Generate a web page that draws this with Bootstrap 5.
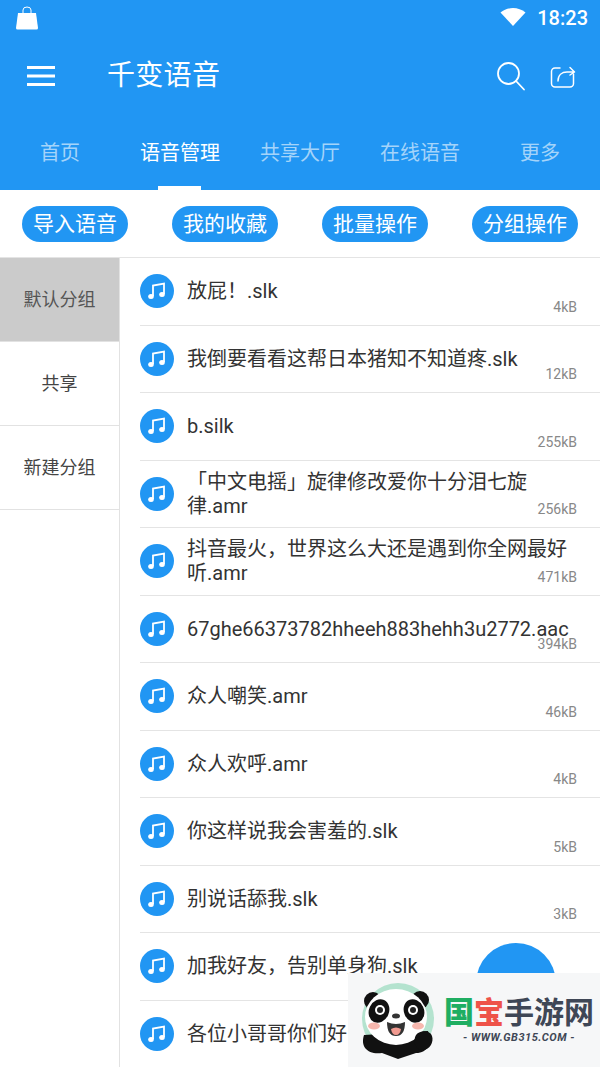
<!DOCTYPE html>
<html lang="zh">
<head>
    <meta charset="UTF-8">
    <meta name="viewport" content="width=device-width, initial-scale=1">
    <title>千变语音</title>
    <link href="https://cdn.jsdelivr.net/npm/bootstrap@5.3.0/dist/css/bootstrap.min.css" rel="stylesheet">
    <style>
        html, body { height: 100%; overflow: hidden; }
        body { font-family: Roboto, "Noto Sans CJK SC", sans-serif; color: #333; background: #fff; }
        .app-page { width: 600px; height: 1067px; overflow: hidden; }
        .app-head { background: #2196f3; height: 190px; color: #fff; }
        .status-bar { height: 36px; padding: 6px 12px 0 15px; }
        .status-time { font-size: 20px; font-weight: 500; line-height: 24px; margin-left: 11px; }
        .tool-bar { height: 80px; padding: 0 20px 0 27px; }
        .app-title { font-size: 28px; line-height: 40px; margin: 0 0 0 52px; font-weight: 400; letter-spacing: .3px; }
        .head-tabs { height: 74px; }
        .head-tab { width: 120px; font-size: 20px; line-height: 28px; padding-top: 23px; color: rgba(255,255,255,.6); text-decoration: none; position: relative; text-align: center; }
        .head-tab.on { color: #fff; }
        .head-tab.on::after { content: ""; position: absolute; left: 38px; bottom: 0; width: 43px; height: 4px; background: #fff; }
        .tool-pills { height: 68px; border-bottom: 1px solid #e4e4e4; }
        .pill-cell { width: 150px; }
        .tool-pill { background: #2196f3; color: #fff; font-size: 21px; line-height: 36px; height: 36px; width: 106px; padding: 0; border: 0; border-radius: 18px; white-space: nowrap; }
        .side-bar { width: 120px; border-right: 1px solid #e2e2e2; }
        .side-item { height: 84px; font-size: 18px; color: #444; border-bottom: 1px solid #e2e2e2; }
        .side-item.on { background: #cbcbcb; color: #555; }
        .file-row { height: 67.5px; margin-left: 20px; border-bottom: 1px solid #e4e4e4; position: relative; }
        .file-note { width: 34px; height: 34px; border-radius: 50%; background: #2196f3; flex: none; }
        .file-name { font-size: 20px; line-height: 24px; margin-left: 13px; width: 400px; color: #333; word-break: break-all; }
        .file-name.one-line { white-space: nowrap; }
        .file-size { position: absolute; right: 23px; bottom: 10px; font-size: 14px; line-height: 16px; color: #888; }
        .fab-round { position: absolute; left: 476px; top: 943px; width: 80px; height: 80px; border-radius: 50%; background: #2196f3; }
        .mark-box { position: absolute; left: 348px; top: 973px; width: 252px; height: 94px; background: #f6f7f8; }
        .mark-cn { font-size: 30px; line-height: 36px; font-weight: 700; white-space: nowrap; color: #3f4756; }
        .mark-cn b { font-weight: 900; }
        .mark-g { color: #1fae62; }
        .mark-r { color: #ee5349; }
        .mark-url { font-size: 11px; line-height: 14px; font-weight: 700; font-style: italic; color: #3f4756; letter-spacing: .5px; white-space: nowrap; }
    </style>
</head>
<body>
<div class="app-page position-relative d-flex flex-column">

    <!-- cabecalho azul -->
    <header class="app-head flex-shrink-0">
        <div class="status-bar d-flex align-items-start">
            <svg width="24" height="24" viewBox="0 0 24 24"><path d="M3 7h18l2 15a1.5 1.5 0 0 1-1.5 1.500h-19A1.500 1.500 0 0 1 1 22z" fill="#fff"/><path d="M8 8V4a4 3 0 0 1 8 0v4" fill="none" stroke="#fff" stroke-width="1"/></svg>
            <svg class="ms-auto" width="26" height="20" viewBox="0 0 26 20"><path d="M0.500 6.500C7.500 0.500 18.500 0.500 25.500 6.500L13 20z" fill="#fff"/></svg>
            <span class="status-time">18:23</span>
        </div>
        <div class="tool-bar d-flex align-items-center">
            <svg width="28" height="22" viewBox="0 0 28 22"><path d="M0 2.500h28M0 11h28M0 19.500h28" stroke="#fff" stroke-width="3"/></svg>
            <h1 class="app-title">千变语音</h1>
            <svg class="ms-auto" width="30" height="30" viewBox="0 0 30 30" fill="none" stroke="#fff" stroke-width="1.800"><circle cx="12.500" cy="12.500" r="10.500"/><path d="M20 20l8 8.500" stroke-linecap="round"/></svg>
            <svg class="ms-4 me-1" width="26" height="24" viewBox="0 0 26 24" fill="none" stroke="#fff" stroke-width="1.500" stroke-linecap="round" stroke-linejoin="round"><path d="M10 4H5a3.500 3.500 0 0 0-3.500 3.500v12A3.500 3.500 0 0 0 5 23h15a3.500 3.500 0 0 0 3.500-3.500V10"/><path d="M8 17c0-6 4-9 9-9h7M20 3.500l4.500 4.500-4.500 3"/></svg>
        </div>
        <nav class="head-tabs d-flex">
            <a class="head-tab" href="#">首页</a>
            <a class="head-tab on" href="#">语音管理</a>
            <a class="head-tab" href="#">共享大厅</a>
            <a class="head-tab" href="#">在线语音</a>
            <a class="head-tab" href="#">更多</a>
        </nav>
    </header>

    <!-- botoes -->
    <div class="tool-pills d-flex flex-shrink-0">
        <div class="pill-cell d-flex justify-content-center align-items-center"><button class="btn tool-pill" type="button">导入语音</button></div>
        <div class="pill-cell d-flex justify-content-center align-items-center"><button class="btn tool-pill" type="button">我的收藏</button></div>
        <div class="pill-cell d-flex justify-content-center align-items-center"><button class="btn tool-pill" type="button">批量操作</button></div>
        <div class="pill-cell d-flex justify-content-center align-items-center"><button class="btn tool-pill" type="button">分组操作</button></div>
    </div>

    <div class="d-flex flex-grow-1 overflow-hidden">
        <aside class="side-bar flex-shrink-0">
            <div class="side-item on d-flex align-items-center justify-content-center">默认分组</div>
            <div class="side-item d-flex align-items-center justify-content-center">共享</div>
            <div class="side-item d-flex align-items-center justify-content-center">新建分组</div>
        </aside>
        <div class="flex-grow-1" id="fileList"></div>
    </div>

    <div class="fab-round"></div>

    <!-- marca d'agua -->
    <div class="mark-box d-flex align-items-center">
        <svg class="ms-2 flex-shrink-0" width="84" height="78" viewBox="0 0 84 78">
            <circle cx="42" cy="38" r="36" fill="#b4e3cf"/>
            <path d="M8 54c-4 12 4 20 18 18l16 6 18-6c12 0 16-10 12-22z" fill="#111"/>
            <circle cx="17" cy="20" r="9" fill="#111"/><circle cx="64" cy="19" r="9" fill="#111"/>
            <ellipse cx="40" cy="36" rx="31" ry="28" fill="#fff"/>
            <ellipse cx="23" cy="30" rx="10" ry="12" transform="rotate(25 23 30)" fill="#111"/>
            <ellipse cx="58" cy="30" rx="10" ry="12" transform="rotate(-25 58 30)" fill="#111"/>
            <circle cx="24" cy="29" r="5" fill="#fff"/><circle cx="57" cy="29" r="5" fill="#fff"/>
            <circle cx="24" cy="29" r="3" fill="#222"/><circle cx="57" cy="29" r="3" fill="#222"/>
            <ellipse cx="40" cy="35" rx="4" ry="2.500" fill="#333"/>
            <path d="M31 41q9 4 18 0q0 14-9 14t-9-14z" fill="#333"/>
            <path d="M35 48q5-3 10 0q-1 6-5 6t-5-6z" fill="#f19a90"/>
            <ellipse cx="18" cy="45" rx="6" ry="3.500" fill="#f7b7ae"/><ellipse cx="62" cy="45" rx="6" ry="3.500" fill="#f7b7ae"/>
            <path d="M60 54c4-5 14-5 16 1s-2 14-10 14-9-10-6-15z" fill="#111"/>
        </svg>
        <div class="ms-1 text-center">
            <div class="mark-cn"><b class="mark-g">国</b><b class="mark-r">宝</b>手游网</div>
            <div class="mark-url">- WWW.GB315.COM -</div>
        </div>
    </div>
</div>

<script>
    // lista de arquivos
    const files = [
        ['放屁！.slk', '4kB'],
        ['我倒要看看这帮日本猪知不知道疼.slk', '12kB'],
        ['b.silk', '255kB'],
        ['「中文电摇」旋律修改爱你十分泪七旋<br>律.amr', '256kB'],
        ['抖音最火，世界这么大还是遇到你全网最好<br>听.amr', '471kB'],
        ['67ghe66373782hheeh883hehh3u2772.aac', '394kB'],
        ['众人嘲笑.amr', '46kB'],
        ['众人欢呼.amr', '4kB'],
        ['你这样说我会害羞的.slk', '5kB'],
        ['别说话舔我.slk', '3kB'],
        ['加我好友，告别单身狗.slk', ''],
        ['各位小哥哥你们好', '']
    ];
    const note = '<svg width="34" height="34" viewBox="0 0 34 34"><path d="M13 22V11.500l11-2V20" fill="none" stroke="#fff" stroke-width="1.800"/><ellipse cx="11" cy="22.500" rx="2.800" ry="2.500" fill="#fff"/><ellipse cx="22" cy="20.500" rx="2.800" ry="2.500" fill="#fff"/></svg>';
    document.getElementById('fileList').innerHTML = files.map(function (f) {
        return '<div class="file-row d-flex align-items-center">' +
            '<div class="file-note">' + note + '</div>' +
            '<div class="file-name' + (f[0].includes('<br>') ? '' : ' one-line') + '">' + f[0] + '</div>' +
            (f[1] ? '<span class="file-size">' + f[1] + '</span>' : '') +
            '</div>';
    }).join('');
</script>
<script src="https://cdn.jsdelivr.net/npm/bootstrap@5.3.0/dist/js/bootstrap.bundle.min.js"></script>
</body>
</html>
